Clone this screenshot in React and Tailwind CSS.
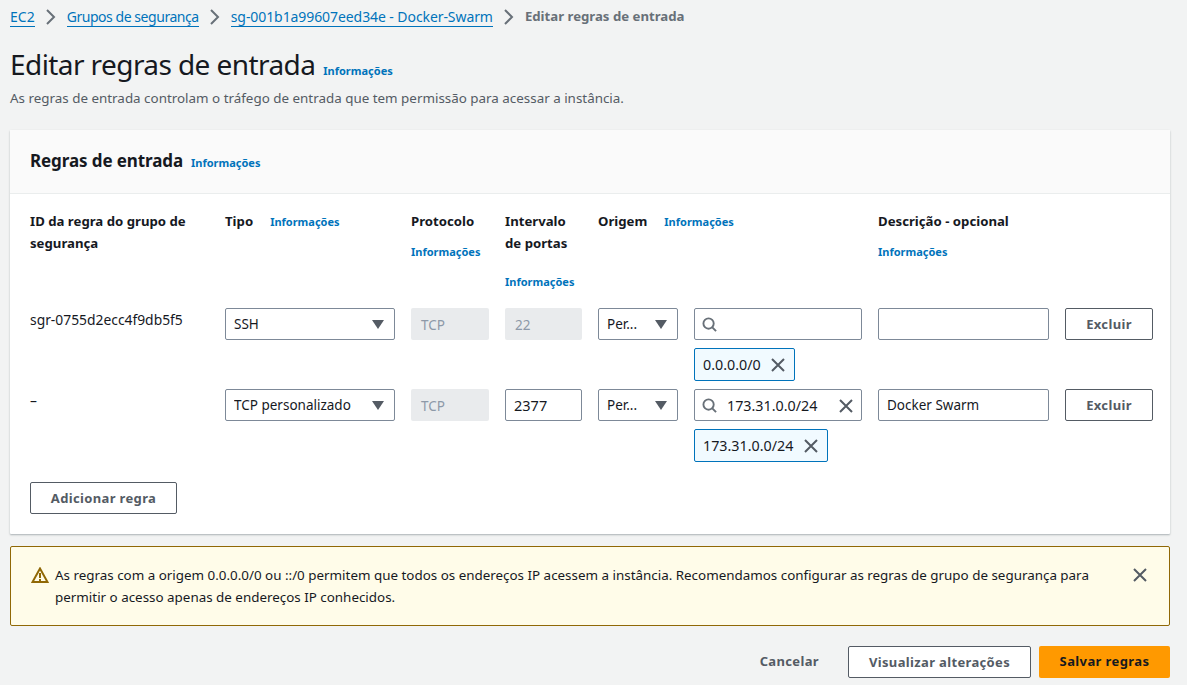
const font = { fontFamily: '"Noto Sans", sans-serif' };

const gridClasses = 'grid grid-cols-[179px_170px_78px_77px_80px_168px_171px_88px] gap-x-4';
const inputClasses = 'h-8 w-full flex items-center border border-[#7d8998] rounded-[2px] bg-white px-2 pt-px text-[13.5px] text-[#16191f]';
const disabledClasses = 'h-8 w-full flex items-center rounded-[2px] bg-[#e9ebed] px-[10px] pt-[2px] text-[13.5px] text-[#8d99a8]';
const buttonClasses = 'h-8 flex items-center justify-center border border-[#545b64] rounded-[2px] bg-white pt-px text-[13px] font-bold text-[#545b64] tracking-[0.35px]';

const Info = ( { className = '' } ) => (
	<a className={ `text-[11px] font-bold text-[#0073bb] leading-4 ${ className }` }>Informações</a>
);

const CloseIcon = ( { size = 16 } ) => (
	<svg width={ size } height={ size } viewBox="0 0 16 16" fill="none" stroke="#545b64" strokeWidth="2" className="shrink-0">
		<path d="M2 2l12 12M14 2L2 14" />
	</svg>
);

const SearchIcon = () => (
	<svg width="15" height="15" viewBox="0 0 16 16" fill="none" stroke="#687078" strokeWidth="2" className="shrink-0 -ml-px">
		<circle cx="7" cy="7" r="5.5" />
		<path d="M11 11L15 15" />
	</svg>
);

const Select = ( { label } ) => (
	<div className={ `${ inputClasses } justify-between pr-[10px]` }>
		<span className="truncate">{ label }</span>
		<svg width="12" height="9" viewBox="0 0 12 9" fill="#545b64" className="shrink-0 -mt-px">
			<path d="M0 0h12L6 9z" />
		</svg>
	</div>
);

const Token = ( { label, className } ) => (
	<div className={ `mt-2 h-[33px] flex items-center justify-between border border-[#0073bb] rounded-[2px] bg-[#f1faff] pl-2 pr-[8px] text-[14.3px] text-[#16191f] ${ className }` }>
		<span>{ label }</span>
		<CloseIcon />
	</div>
);

const Rule = ( { id, type, port, search, token, tokenClass, description } ) => (
	<div className={ `${ gridClasses } mb-2` }>
		<div className="pt-px text-[13.85px] text-[#16191f] leading-[22px]">{ id }</div>
		<Select label={ type } />
		<div className={ disabledClasses }>TCP</div>
		{ port
			? <div className={ `${ inputClasses } text-[14.5px]` }>{ port }</div>
			: <div className={ disabledClasses }>22</div> }
		<Select label="Per..." />
		<div>
			<div className={ `${ inputClasses } gap-[10px] pr-[7px]` }>
				<SearchIcon />
				<span className="flex-1 text-[14.3px]">{ search }</span>
				{ search && <CloseIcon /> }
			</div>
			<Token label={ token } className={ tokenClass } />
		</div>
		<div className={ inputClasses }>{ description }</div>
		<div className={ buttonClasses }>Excluir</div>
	</div>
);

const HeaderCell = ( { children, className = '' } ) => (
	<div className={ `text-[13.2px] font-bold text-[#16191f] leading-[22px] ${ className }` }>{ children }</div>
);

const Crumb = ( { children, className = '' } ) => (
	<>
		<a className={ `text-sm text-[#0073bb] border-b border-[#0073bb] leading-[18px] ${ className }` }>{ children }</a>
		<svg width="11" height="16" viewBox="0 0 11 16" fill="none" stroke="#687078" strokeWidth="2" className="ml-[10px] mr-[11px]">
			<path d="M2 1l7 7-7 7" />
		</svg>
	</>
);

export default function App() {
	return (
		<div style={ font } className="w-[1187px] h-[685px] overflow-hidden bg-[#f2f3f3] pl-[10px] pr-[17px] pt-[7px]">
			<nav className="flex items-center h-5">
				<Crumb>EC2</Crumb>
				<Crumb className="tracking-[-0.45px]">Grupos de segurança</Crumb>
				<Crumb className="tracking-[-0.08px]">sg-001b1a99607eed34e - Docker-Swarm</Crumb>
				<span className="text-[13.2px] font-bold text-[#687078]">Editar regras de entrada</span>
			</nav>

			<div className="flex items-baseline mt-[19px]">
				<h1 className="text-[28px] tracking-[-0.58px] text-[#16191f] leading-9">Editar regras de entrada</h1>
				<Info className="ml-2" />
			</div>
			<p className="mt-[6px] text-[13.4px] text-[#545b64] leading-5">As regras de entrada controlam o tráfego de entrada que tem permissão para acessar a instância.</p>

			<section className="mt-[22px] bg-white shadow-[0_1px_2px_rgba(0,28,36,0.3)] rounded-[1px]">
				<div className="h-[64px] flex items-center px-5 bg-[#fafafa] border-b border-[#eaeded]">
					<h2 className="-mt-[2px] text-[17px] tracking-[-0.1px] font-bold text-[#16191f]">Regras de entrada</h2>
					<Info className="ml-2 mt-[3px]" />
				</div>

				<div className="px-5 pt-4 pb-5">
					<div className={ `${ gridClasses } h-[98px]` }>
						<HeaderCell>ID da regra do grupo de segurança</HeaderCell>
						<HeaderCell className="flex gap-[17px]">Tipo <Info className="mt-[4px]" /></HeaderCell>
						<HeaderCell>
							Protocolo
							<Info className="block mt-[12px]" />
						</HeaderCell>
						<HeaderCell>
							Intervalo de portas
							<Info className="block mt-[20px]" />
						</HeaderCell>
						<HeaderCell className="col-span-2 flex gap-[17px]">Origem <Info className="mt-[4px]" /></HeaderCell>
						<HeaderCell className="col-span-2">
							Descrição - opcional
							<Info className="block mt-[12px]" />
						</HeaderCell>
					</div>

					<Rule id="sgr-0755d2ecc4f9db5f5" type="SSH" token="0.0.0.0/0" tokenClass="w-[101px]" />
					<Rule id="–" type="TCP personalizado" port="2377" search="173.31.0.0/24" token="173.31.0.0/24" tokenClass="w-[134px]" description="Docker Swarm" />

					<div className={ `${ buttonClasses } w-[147px] mt-5` }>Adicionar regra</div>
				</div>
			</section>

			<div className="mt-3 h-20 flex items-start border border-[#906806] rounded-[2px] bg-[#fffce9] pl-5 pr-[21px] pt-[17px]">
				<svg width="18" height="16" viewBox="0 0 18 16" className="shrink-0 mt-[3px]">
					<path d="M9 1.5L1.5 15h15z" fill="none" stroke="#906806" strokeWidth="2" strokeLinejoin="miter" />
					<path d="M9 6v5M9 12v2" stroke="#906806" strokeWidth="2" />
				</svg>
				<p className="ml-[6px] flex-1 text-[13.4px] text-[#16191f] leading-[22px]">As regras com a origem 0.0.0.0/0 ou ::/0 permitem que todos os endereços IP acessem a instância. Recomendamos configurar as regras de grupo de segurança para permitir o acesso apenas de endereços IP conhecidos.</p>
				<div className="mt-[3px] ml-[31px]"><CloseIcon /></div>
			</div>

			<div className="mt-5 flex items-center justify-end">
				<span className="text-[13px] tracking-[0.35px] font-bold text-[#545b64] mr-[29px]">Cancelar</span>
				<div className={ `${ buttonClasses } w-[183px] mr-2` }>Visualizar alterações</div>
				<div className="h-8 w-[131px] flex items-center justify-center rounded-[2px] bg-[#ff9900] text-[13px] tracking-[0.4px] font-bold text-[#16191f]">Salvar regras</div>
			</div>
		</div>
	);
}
